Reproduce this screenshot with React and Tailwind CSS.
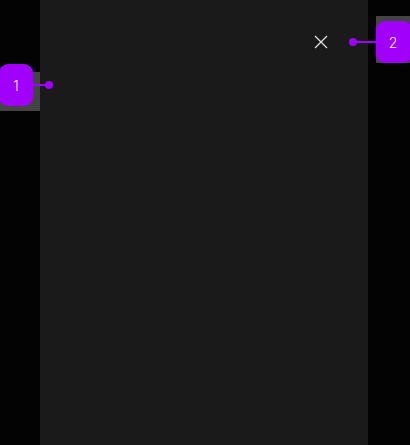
import React from "react";

function Badge({ children, className }) {
  return (
    <div className={"flex h-[42px] w-[34px] shrink-0 items-center justify-center rounded-[9px] bg-[#a100fb] text-[14px] font-light text-[#fbeaff] " + (className || "")}>
      {children}
    </div>
  );
}

export default function App() {
  return (
    <div className="relative flex h-[445px] w-[410px] overflow-hidden bg-[#030303]" style={{ fontFamily: "Inter, 'Liberation Sans', sans-serif" }}>
      <div className="w-[40px] shrink-0" />
      <div className="flex w-[328px] shrink-0 justify-end bg-[#1a1a1a] pr-[40px] pt-[35px]">
        <button className="flex h-[14px] w-[14px] items-center justify-center text-[#e5e5e5]">
          <svg width="14" height="14" viewBox="0 0 14 14" fill="none" stroke="currentColor" strokeWidth="1.2">
            <path d="M1 1 L13 13 M13 1 L1 13" />
          </svg>
        </button>
      </div>
      <div className="flex-1" />

      {/* annotation 1 */}
      <div className="absolute left-0 top-[72px] h-[39px] w-[40px] bg-[#555555]/80" />
      <div className="absolute left-[-1px] top-[64px] flex items-center">
        <Badge>1</Badge>
        <div className="h-[2px] w-[13px] bg-[#a100fb]" />
        <div className="-ml-[1px] h-[8px] w-[8px] rounded-full bg-[#a100fb]" />
      </div>

      {/* annotation 2 */}
      <div className="absolute left-[376px] top-[16px] h-[47px] w-[34px] bg-[#555555]/80" />
      <div className="absolute left-[349px] top-[21px] flex items-center">
        <div className="h-[8px] w-[8px] rounded-full bg-[#a100fb]" />
        <div className="-ml-[1px] h-[2px] w-[20px] bg-[#a100fb]" />
        <Badge className="w-[36px] pr-[2px]">2</Badge>
      </div>
    </div>
  );
}
